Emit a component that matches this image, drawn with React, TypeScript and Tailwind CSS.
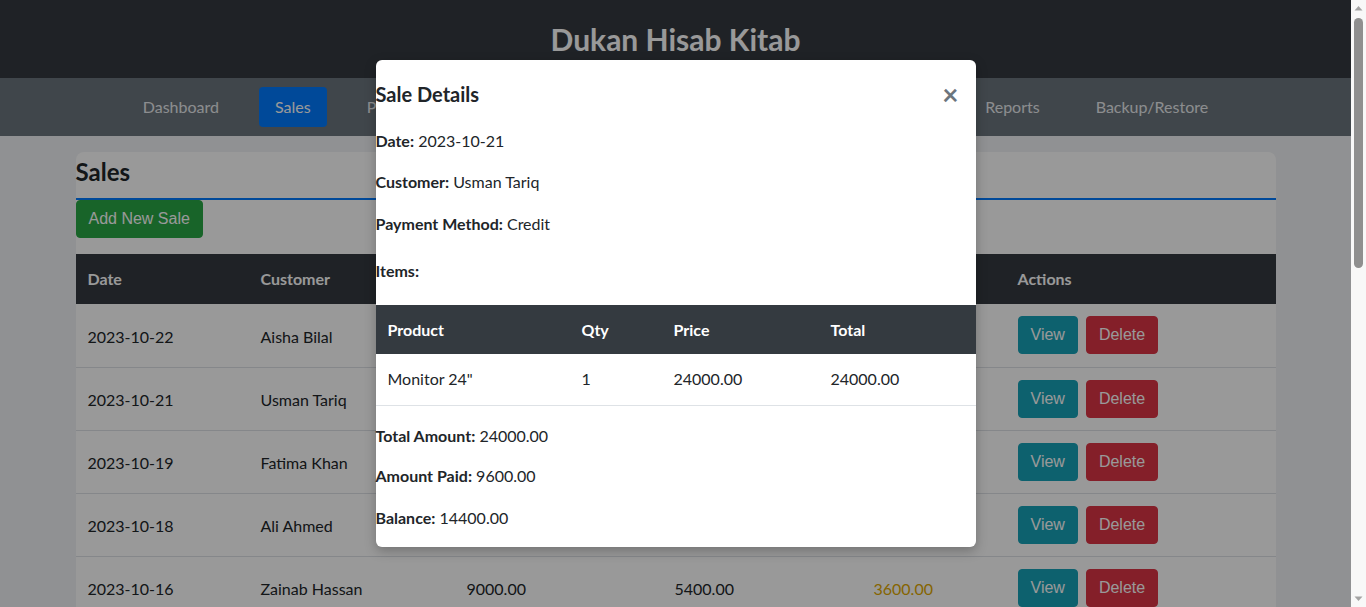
import { useState } from "react";

type Sale = { date: string; customer: string; total: string; paid: string; balance: string };

const sales: Sale[] = [
  { date: "2023-10-22", customer: "Aisha Bilal", total: "15000.00", paid: "15000.00", balance: "0.00" },
  { date: "2023-10-21", customer: "Usman Tariq", total: "24000.00", paid: "9600.00", balance: "14400.00" },
  { date: "2023-10-19", customer: "Fatima Khan", total: "7200.00", paid: "7200.00", balance: "0.00" },
  { date: "2023-10-18", customer: "Ali Ahmed", total: "12500.00", paid: "10000.00", balance: "2500.00" },
  { date: "2023-10-16", customer: "Zainab Hassan", total: "9000.00", paid: "5400.00", balance: "3600.00" },
  { date: "2023-10-15", customer: "Bilal Raza", total: "4300.00", paid: "4300.00", balance: "0.00" },
  { date: "2023-10-14", customer: "Sana Malik", total: "18000.00", paid: "12000.00", balance: "6000.00" },
  { date: "2023-10-12", customer: "Hamza Iqbal", total: "6500.00", paid: "6500.00", balance: "0.00" },
  { date: "2023-10-11", customer: "Ayesha Noor", total: "11000.00", paid: "8000.00", balance: "3000.00" },
  { date: "2023-10-09", customer: "Imran Shah", total: "3200.00", paid: "3200.00", balance: "0.00" },
  { date: "2023-10-08", customer: "Maryam Ali", total: "27500.00", paid: "20000.00", balance: "7500.00" },
  { date: "2023-10-06", customer: "Kamran Akmal", total: "5600.00", paid: "5600.00", balance: "0.00" },
  { date: "2023-10-05", customer: "Hina Javed", total: "8800.00", paid: "4400.00", balance: "4400.00" },
];

const navItems = ["Dashboard", "Sales", "Products", "Customers", "Suppliers", "Purchases", "Expenses", "Reports", "Backup/Restore"];

const btn = "font-['Liberation_Sans',Arial,sans-serif] text-base leading-6 px-3 py-1.5 border rounded text-white";

// browser scrollbar look-alike on the right edge
const Scrollbar = () => (
  <div className="w-[15px] h-full bg-[#f8f8f8] flex flex-col items-center">
    <svg width="15" height="17" viewBox="0 0 15 17">
      <path d="M3.5 10.5 L7.5 6 L11.5 10.5 Z" fill="#a3a3a3" />
    </svg>
    <div className="w-[9px] h-[250px] mt-px rounded-full bg-[#8f8f8f]" />
    <div className="flex-1" />
    <svg width="15" height="17" viewBox="0 0 15 17">
      <path d="M3.5 6.5 L7.5 11 L11.5 6.5 Z" fill="#a3a3a3" />
    </svg>
  </div>
);

const App = () => {
  const [open, setOpen] = useState(true);

  return (
    <div className="h-screen flex overflow-hidden font-['Lato','Noto_Sans',sans-serif] text-base text-[#212529]">
      <div className="relative flex-1 overflow-hidden bg-[#f0f2f5]">
        <header className="h-[78px] bg-[#343a40] flex items-center justify-center">
          <h1 className="text-white text-[30px] font-bold">Dukan Hisab Kitab</h1>
        </header>
        <nav className="h-[58px] bg-[#6c757d] flex items-center justify-center gap-6">
          {navItems.map((n) => (
            <a
              key={n}
              className={
                "px-4 py-2 leading-6 rounded " + (n === "Sales" ? "bg-[#007bff] text-white" : "text-[#e9ecef]")
              }
            >
              {n}
            </a>
          ))}
        </nav>

        <main className="max-w-[1200px] mx-auto mt-4 bg-white rounded-lg">
          <h2 className="h-[48px] pb-[6px] flex items-center text-2xl font-bold border-b-2 border-[#007bff]">Sales</h2>
          <button className={btn + " bg-[#28a745] border-[#28a745]"}>Add New Sale</button>
          <table className="w-full mt-4 table-fixed border-collapse">
            <thead>
              <tr className="bg-[#343a40] text-white h-[50px] text-left">
                <th className="w-[173px] px-3 font-bold">Date</th>
                <th className="w-[206px] px-3 font-bold">Customer</th>
                <th className="w-[208px] px-3 font-bold">Total Amount</th>
                <th className="w-[199px] px-3 font-bold">Amount Paid</th>
                <th className="w-[144px] px-3 font-bold">Balance</th>
                <th className="px-3 font-bold">Actions</th>
              </tr>
            </thead>
            <tbody>
              {sales.map((s) => (
                <tr key={s.date} className="h-[63px] border-b border-[#dee2e6]">
                  <td className="px-3 pt-[3px]">{s.date}</td>
                  <td className="px-3 pt-[3px]">{s.customer}</td>
                  <td className="px-3 pt-[3px]">{s.total}</td>
                  <td className="px-3 pt-[3px]">{s.paid}</td>
                  <td className={"px-3 pt-[3px] " + (s.balance === "0.00" ? "text-[#28a745]" : "text-[#e0a800]")}>
                    {s.balance}
                  </td>
                  <td className="px-3">
                    <div className="flex gap-2">
                      <button className={btn + " bg-[#17a2b8] border-[#17a2b8]"} onClick={() => setOpen(true)}>
                        View
                      </button>
                      <button className={btn + " bg-[#dc3545] border-[#dc3545]"}>Delete</button>
                    </div>
                  </td>
                </tr>
              ))}
            </tbody>
          </table>
        </main>

        {open && (
          <div className="absolute inset-0 bg-black/40 flex justify-center items-start pt-[60px]">
            <div className="w-[600px] bg-white rounded-md shadow-[0_4px_12px_rgba(0,0,0,0.25)] pb-[17px] flex flex-col">
              <div className="h-[68px] flex items-center justify-between pr-[17px]">
                <h3 className="text-xl font-bold">Sale Details</h3>
                <button
                  className="text-[#6c757d] text-[28px] font-bold leading-none"
                  onClick={() => setOpen(false)}
                >
                  ×
                </button>
              </div>
              <p className="leading-6 mt-px">
                <strong>Date:</strong> 2023-10-21
              </p>
              <p className="leading-6 mt-[17px]">
                <strong>Customer:</strong> Usman Tariq
              </p>
              <p className="leading-6 mt-[18px]">
                <strong>Payment Method:</strong> Credit
              </p>
              <p className="leading-6 mt-[23px] font-bold">Items:</p>
              <table className="w-full mt-[22px] table-fixed border-collapse">
                <thead>
                  <tr className="bg-[#343a40] text-white h-[49px] text-left">
                    <th className="w-[194px] px-3 font-bold">Product</th>
                    <th className="w-[92px] px-3 font-bold">Qty</th>
                    <th className="w-[157px] px-3 font-bold">Price</th>
                    <th className="px-3 font-bold">Total</th>
                  </tr>
                </thead>
                <tbody>
                  <tr className="h-[51px] border-b border-[#dee2e6]">
                    <td className="px-3">Monitor 24"</td>
                    <td className="px-3">1</td>
                    <td className="px-3">24000.00</td>
                    <td className="px-3">24000.00</td>
                  </tr>
                </tbody>
              </table>
              <p className="leading-6 mt-[18px]">
                <strong>Total Amount:</strong> 24000.00
              </p>
              <p className="leading-6 mt-4">
                <strong>Amount Paid:</strong> 9600.00
              </p>
              <p className="leading-6 mt-[18px]">
                <strong>Balance:</strong> 14400.00
              </p>
            </div>
          </div>
        )}
      </div>
      <Scrollbar />
    </div>
  );
};

export default App;
